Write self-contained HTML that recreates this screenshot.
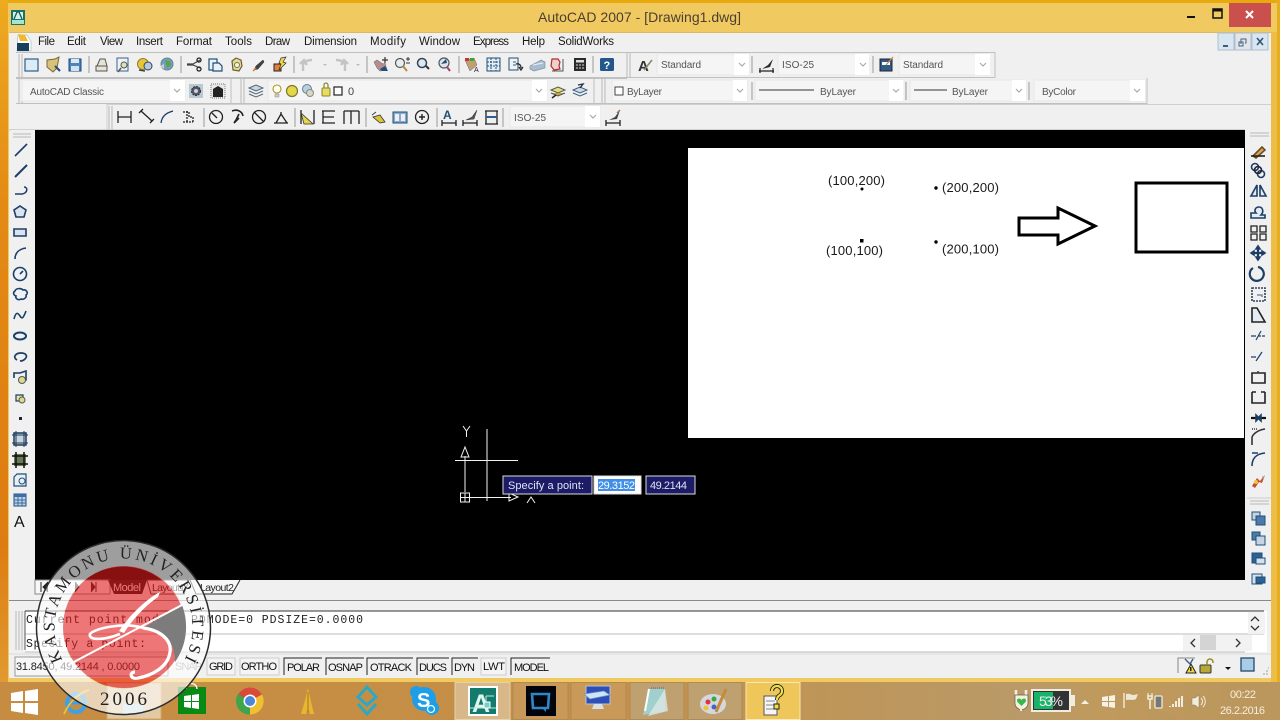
<!DOCTYPE html>
<html><head><meta charset="utf-8"><title>AutoCAD 2007</title>
<style>
html,body{margin:0;padding:0;background:#000;width:1280px;height:720px;overflow:hidden}
svg{display:block}
text{font-family:"Liberation Sans",sans-serif}
.m{font-size:11.5px;fill:#1a1a1a}
.g{font-size:10px;fill:#555}
.s{font-size:11px;fill:#111}
.c{font-family:"Liberation Mono",monospace;font-size:11.5px;fill:#222}
.i{fill:none;stroke:#1c3f66;stroke-width:1.6}
.k{fill:none;stroke:#222;stroke-width:1.3}
.d{fill:none;stroke:#223;stroke-width:1.2}
.sep{stroke:#9a9a9a;stroke-width:1}
.cb{fill:#f5f5f5;stroke:#e8e8e8}
.ar{fill:none;stroke:#aaa;stroke-width:1.2}
.gr{fill:none;stroke:#b8b8b8;stroke-width:1}
</style></head><body>
<svg width="1280" height="720" viewBox="0 0 1280 720" xmlns="http://www.w3.org/2000/svg">
<defs>
<linearGradient id="bar" x1="0" x2="1" y1="0" y2="0"><stop offset="0" stop-color="#c68d42"/><stop offset=".45" stop-color="#c58f47"/><stop offset=".8" stop-color="#b99a68"/><stop offset=".86" stop-color="#c09a5c"/><stop offset="1" stop-color="#b6935f"/></linearGradient>
<linearGradient id="edge" x1="0" x2="0" y1="0" y2="1"><stop offset="0" stop-color="#eeaa20"/><stop offset=".3" stop-color="#e38a14"/><stop offset=".8" stop-color="#dd7c12"/><stop offset="1" stop-color="#e09a30"/></linearGradient>
<path id="ringp" d="M62.6 660 A69 69 0 1 1 190 660" fill="none"/>
</defs>

<!-- window frame -->
<rect width="1280" height="720" fill="#f1c961"/>
<rect x="0" y="0" width="1280" height="3" fill="#e8a90f"/>
<rect x="0" y="0" width="8" height="682" fill="url(#edge)"/>
<rect x="1271" y="32" width="9" height="650" fill="#eebd48"/>
<rect x="1277" y="0" width="3" height="682" fill="#e8ad1c"/>
<rect x="9" y="32" width="1262" height="646" fill="#f0f0f0"/>
<rect x="9" y="32" width="1262" height="1" fill="#d9b968"/>

<!-- title -->
<rect x="11" y="10" width="14" height="15" fill="#14766b"/>
<rect x="13" y="12" width="10" height="7" fill="#d8eee8"/>
<path d="M14 19l3-7h2l3 7" fill="none" stroke="#0f5f56" stroke-width="1.3"/>
<rect x="12" y="20" width="12" height="4" fill="#a9e3d0"/>
<text x="538" y="22" font-size="14" fill="#4a4030" textLength="203">AutoCAD 2007 - [Drawing1.dwg]</text>
<rect x="1187" y="16" width="8" height="2" fill="#111"/>
<rect x="1213" y="9" width="9" height="9" fill="none" stroke="#111" stroke-width="1.5"/><rect x="1213" y="9" width="9" height="2.5" fill="#111"/>
<rect x="1229" y="3" width="42" height="24" fill="#c9504c"/>
<path d="M1246 11l7 7M1253 11l-7 7" stroke="#fff" stroke-width="2"/>

<!-- MDI buttons -->
<rect x="1218" y="33" width="16" height="17" fill="#d8e6f2" stroke="#aebfce"/><rect x="1223" y="45" width="5" height="2" fill="#3b5c7e"/>
<rect x="1235" y="33" width="16" height="17" fill="#e2e6ea" stroke="#aebfce"/><path d="M1241 44v-5h5v4h-1M1239 46v-4h4v4z" fill="none" stroke="#47617c"/>
<rect x="1252" y="33" width="16" height="17" fill="#d8e6f2" stroke="#aebfce"/><path d="M1257 38l6 7M1263 38l-6 7" stroke="#36556f" stroke-width="1.6"/>

<!-- menu -->
<path d="M18 35h9l4 6v10H17z" fill="#fff" stroke="#8aa" stroke-width=".5"/>
<path d="M17 43h12v8H17z" fill="#17405f"/><path d="M18 34l7 1 3 6h-8z" fill="#f0b92c"/>
<g class="m">
<text x="38" y="45" textLength="17">File</text>
<text x="67" y="45" textLength="19">Edit</text>
<text x="100" y="45" textLength="23">View</text>
<text x="136" y="45" textLength="27">Insert</text>
<text x="176" y="45" textLength="36">Format</text>
<text x="225" y="45" textLength="27">Tools</text>
<text x="265" y="45" textLength="25">Draw</text>
<text x="304" y="45" textLength="53">Dimension</text>
<text x="370" y="45" textLength="36">Modify</text>
<text x="419" y="45" textLength="41">Window</text>
<text x="473" y="45" textLength="36">Express</text>
<text x="522" y="45" textLength="23">Help</text>
<text x="558" y="45" textLength="56">SolidWorks</text>
</g>

<!-- toolbar rows -->
<path d="M16 77.500H995V52.500M16 103.500H1147V78M16 52.500H995M16 78.500H627" fill="none" stroke="#c0c0c0"/>
<path d="M107 130V104.500H1271" fill="none" stroke="#d0d0d0"/>
<path d="M9 130H1245" stroke="#b4b4b4"/>
<path d="M19 54v23M22 54v23M19 79v24M22 79v24M109 106v24M112 106v24" class="gr"/>

<!-- row 1 icons -->
<rect x="25" y="59" width="13" height="12" fill="#dcecf6" stroke="#2c5f86" stroke-width="1.2"/>
<path d="M47 60l8-1 4-2-2 11-4 4-6-5z" fill="#d8c279" stroke="#7a6a30"/><path d="M55 66l5 5" stroke="#234c78" stroke-width="2"/>
<rect x="69" y="59" width="12" height="12" fill="#4d86b8" stroke="#1d4b78"/><rect x="71" y="59" width="8" height="4" fill="#dbe7f1"/><rect x="71" y="66" width="8" height="5" fill="#d6e3ee"/>
<path d="M89 56v17" class="sep"/>
<path d="M97 66l3-7h5l2 7zM96 66h11v5H96z" fill="#e7e2d6" stroke="#555"/>
<rect x="117" y="58" width="11" height="13" fill="#eef2f6" stroke="#3a6288"/><circle cx="124" cy="65" r="3" fill="#d8e4b8" stroke="#555"/><path d="M121 68l-3 4" stroke="#555" stroke-width="1.5"/>
<circle cx="143" cy="64" r="5.5" fill="#e3c83a" stroke="#9a7a25"/><circle cx="148" cy="66" r="4" fill="#b6cbe0" stroke="#345"/><path d="M139 70l6 1" stroke="#345" stroke-width="1.5"/>
<circle cx="167" cy="64" r="6" fill="#6fa0bf" stroke="#67858f"/><path d="M165 60l5 1 1 4-4 3z" fill="#5fa04a"/><path d="M160 66l4-2v5z" fill="#ccc"/>
<path d="M181 56v17" class="sep"/>
<path d="M187 64h6l7-4M187 65h6l7 3" fill="none" stroke="#444" stroke-width="1.2"/><circle cx="199" cy="60" r="2" class="k"/><circle cx="199" cy="69" r="2" class="k"/>
<rect x="209" y="59" width="8" height="11" fill="#eef3f7" stroke="#1f4f78" stroke-width="1.2"/><path d="M213 63h6l3 3v5h-9z" fill="#eaf0f5" stroke="#1f4f78" stroke-width="1.2"/>
<path d="M232 61l4-3 5 2 1 6-3 5-6-1z" fill="#e4d8a0" stroke="#6e5c2a" stroke-width="1.2"/><circle cx="237" cy="65" r="2.5" fill="#f2f2e6" stroke="#6e7d3a"/>
<path d="M254 70l2-4 7-6 1 2-6 7z" fill="#444" stroke="#222" stroke-width=".5"/><path d="M253 71l3-3" stroke="#d47a36" stroke-width="1.5"/>
<rect x="274" y="64" width="7" height="7" fill="#e67f3c" stroke="#222"/><path d="M281 58l5-1-3 5 3 1-7 7 2-6-2-1z" fill="#f0d848" stroke="#333" stroke-width=".7"/>
<path d="M294 56v17" class="sep"/>
<path d="M303 71v-5c0-4 4-6 9-6M300 64l4-4 3 5" fill="none" stroke="#c2c4c6" stroke-width="2.4"/>
<path d="M323 64h4l-2 2z" fill="#bbb"/>
<path d="M345 71v-5c0-4-4-6-9-6M348 64l-4-4-3 5" fill="none" stroke="#c2c4c6" stroke-width="2.4"/>
<path d="M356 64h4l-2 2z" fill="#bbb"/>
<path d="M367 56v17" class="sep"/>
<path d="M374 62l3-2 6 4 2-1 2 7-7 1-3-3z" fill="#b98c8c" stroke="#777" stroke-width=".6"/><path d="M380 69l5-3 3 5h-6z" fill="#1f4f78"/><path d="M385 57v6M382 60h6" stroke="#333" stroke-width="1.2"/>
<circle cx="400" cy="63" r="4.5" fill="#e4eef4" stroke="#555" stroke-width="1.2"/><path d="M403 66l4 5" stroke="#c08a30" stroke-width="2"/><path d="M408 57v4M406 59h4M406 63h4" stroke="#333"/>
<circle cx="422" cy="63" r="4.5" fill="#dce8f0" stroke="#345" stroke-width="1.5"/><path d="M426 66l3 3" stroke="#333" stroke-width="2"/>
<circle cx="444" cy="63" r="5" fill="#dde6ee" stroke="#555" stroke-width="1.2"/><path d="M441 64l5-5 1 4z" fill="#1f4f78"/><path d="M447 67l3 4" stroke="#a46" stroke-width="2"/>
<path d="M459 56v17" class="sep"/>
<path d="M465 60l9-2 3 7-7 6z" fill="#c0a070" stroke="#666" stroke-width=".5"/><path d="M465 58h4v3h-4z" fill="#c33"/><path d="M470 58h4v3h-4z" fill="#3a3"/><text x="474" y="72" font-size="7" fill="#223">A</text>
<rect x="487" y="58" width="13" height="13" fill="#e6eef4" stroke="#1f4f78"/><path d="M491 58v13M496 58v13M487 62h13M487 66h13" stroke="#1f4f78" stroke-dasharray="2 1"/>
<rect x="509" y="58" width="9" height="12" fill="#eef3f7" stroke="#1f4f78"/><path d="M513 62h3M513 65h3" stroke="#456"/><path d="M516 64c3-1 5 1 5 4M519 67l2 3 2-3" fill="none" stroke="#222" stroke-width="1.2"/>
<path d="M530 66l11-6 4 2v6l-11 3-4-2z" fill="#a9bccb" stroke="#7b93a6" stroke-width=".7"/><path d="M533 65l10-2" stroke="#eef" />
<path d="M552 59h6l2 3-1 4 1 3-6 1-3-4z" fill="#ecd0d0" stroke="#b32a2a" stroke-width="1.2"/><path d="M563 59v12h-11" stroke="#555" fill="none"/>
<rect x="574" y="58" width="12" height="13" fill="#2a2a2a"/><rect x="576" y="60" width="8" height="2.5" fill="#ddd"/><path d="M576 65h8M576 68h8" stroke="#d8d8d8" stroke-dasharray="2 1"/>
<path d="M593 56v17" class="sep"/>
<rect x="600" y="58" width="14" height="13" rx="1.5" fill="#23568c"/><text x="603.5" y="69" font-size="11" font-weight="bold" fill="#fff">?</text>
<path d="M627 53v24M630 53v24" class="gr"/>
<text x="638" y="71" font-size="15" font-weight="bold" fill="#333">A</text><path d="M644 70l8-10" stroke="#886" stroke-width="1.6"/>
<rect x="657" y="54" width="92" height="21" class="cb"/><text x="661" y="68" class="g" textLength="40">Standard</text><rect x="734" y="54" width="15" height="21" fill="#fff"/><path d="M739 63l3 3 3-3" class="ar"/>
<path d="M752 56v17" class="sep"/>
<path d="M759 71h15M760 68v5M773 68v5" stroke="#222" stroke-width="1.2"/><path d="M762 69l6-4 5-6-3 8z" fill="#2b2b2b"/>
<rect x="778" y="54" width="90" height="21" class="cb"/><text x="782" y="68" class="g" textLength="32">ISO-25</text><rect x="855" y="54" width="14" height="21" fill="#fff"/><path d="M860 63l3 3 3-3" class="ar"/>
<path d="M873 56v17" class="sep"/>
<rect x="880" y="59" width="12" height="12" fill="#2e5d88" stroke="#223"/><rect x="882" y="62" width="8" height="3" fill="#fff"/><path d="M886 65l7-8" stroke="#d08a4a" stroke-width="1.3"/>
<rect x="899" y="54" width="90" height="21" class="cb"/><text x="903" y="68" class="g" textLength="40">Standard</text><rect x="975" y="54" width="15" height="21" fill="#fff"/><path d="M980 63l3 3 3-3" class="ar"/>

<!-- row 2 -->
<rect x="22" y="80" width="163" height="21" class="cb"/><text x="30" y="95" class="g" textLength="74">AutoCAD Classic</text><rect x="170" y="80" width="15" height="21" fill="#fff"/><path d="M174 89l3 3 3-3" class="ar"/>
<rect x="189" y="84" width="14" height="14" fill="#b9c9d4"/><circle cx="196" cy="91" r="4.5" fill="#556" stroke="#233" stroke-dasharray="2 1"/><circle cx="196" cy="91" r="2" fill="#c8d4dc"/>
<rect x="211" y="84" width="14" height="14" fill="#e8e8e8" stroke="#777" stroke-dasharray="1 1"/><path d="M213 89l5-3 5 3v8h-10z" fill="#222"/>
<path d="M231 79v25" stroke="#c0c0c0"/>
<path d="M241 79v24M244 79v24" class="gr"/>
<path d="M249 88l7-3 7 3-7 3z" fill="#c7d6e2" stroke="#567"/><path d="M249 91l7 3 7-3M249 94l7 3 7-3" fill="none" stroke="#567"/>
<rect x="268" y="80" width="279" height="21" class="cb"/>
<circle cx="277" cy="89" r="4" fill="#fffdf0" stroke="#a8962a" stroke-width="1.1"/><path d="M275 94h4v3h-4z" fill="#ccc" stroke="#888" stroke-width=".5"/>
<circle cx="292" cy="91" r="5.5" fill="#e4d64a" stroke="#7d7a26" stroke-width="1.2"/>
<circle cx="307" cy="89" r="4.5" fill="#b8d0dc" stroke="#5d8296"/><circle cx="310" cy="93" r="3.5" fill="#d7d7c4" stroke="#888"/>
<rect x="322" y="88" width="8" height="8" rx="1" fill="#e8dd5e" stroke="#87832e"/><path d="M324 88v-3a2 2 0 0 1 4 0v3" fill="none" stroke="#87832e" stroke-width="1.2"/>
<rect x="334" y="87" width="8" height="8" fill="#fff" stroke="#222" stroke-width="1.2"/>
<text x="348" y="95" font-size="11" fill="#444">0</text>
<rect x="532" y="80" width="15" height="21" fill="#fff"/><path d="M536 89l3 3 3-3" class="ar"/>
<path d="M551 90l7-3 7 3-7 3z" fill="#dfe27a" stroke="#555"/><path d="M551 93l7 3 7-3" fill="#c4a830" stroke="#555"/><path d="M552 98l4-3" stroke="#223" stroke-width="1.5"/>
<path d="M573 90l7-3 7 3-7 3z" fill="#cfdbe6" stroke="#3d5f80"/><path d="M573 93l7 3 7-3" fill="none" stroke="#3d5f80"/><path d="M580 88l3-4-5 1" fill="none" stroke="#234" stroke-width="1.4"/>
<path d="M594 79v25" stroke="#c0c0c0"/>
<path d="M602 79v24M605 79v24" class="gr"/>
<rect x="612" y="80" width="135" height="21" class="cb"/><rect x="615" y="87" width="8" height="8" fill="#fff" stroke="#444"/><text x="627" y="95" class="g" textLength="35">ByLayer</text><rect x="733" y="80" width="14" height="21" fill="#fff"/><path d="M737 89l3 3 3-3" class="ar"/>
<path d="M752 82v18" class="sep"/>
<rect x="755" y="80" width="150" height="21" class="cb"/><path d="M759 90h55" stroke="#333"/><text x="820" y="95" class="g" textLength="36">ByLayer</text><rect x="889" y="80" width="14" height="21" fill="#fff"/><path d="M893 89l3 3 3-3" class="ar"/>
<path d="M906 82v18" class="sep"/>
<rect x="910" y="80" width="116" height="21" class="cb"/><path d="M914 90h33" stroke="#333"/><text x="952" y="95" class="g" textLength="36">ByLayer</text><rect x="1012" y="80" width="14" height="21" fill="#fff"/><path d="M1016 89l3 3 3-3" class="ar"/>
<path d="M1029 82v18" class="sep"/>
<rect x="1034" y="80" width="111" height="21" class="cb"/><text x="1042" y="95" class="g" textLength="34">ByColor</text><rect x="1130" y="80" width="15" height="21" fill="#fff"/><path d="M1134 89l3 3 3-3" class="ar"/>

<!-- row 3 -->
<g class="k">
<path d="M118 117h13M118 111v12M131 111v12"/>
<path d="M141 111l11 10M139 113l4-4M150 123l4-4"/>
<path d="M161 123c1-7 5-10 12-12" stroke="#1c3f66"/>
<path d="M183 112h6v5h4v6M183 122h10M187 111v12" stroke-dasharray="2 1"/>
<circle cx="216" cy="117" r="6.5"/><path d="M212 113l5 5"/>
<path d="M232 111c5-2 10 0 11 5M239 114l-3 6-2 3 5-5" stroke-width="1.6"/>
<circle cx="259" cy="117" r="6.5"/><path d="M254 112l10 10"/>
<path d="M274 123h14M276 123l5-9 6 9"/><path d="M281 112v3"/>
</g>
<path d="M204 108v19M295 108v19M366 108v19M437 108v19M503 108v19" class="sep"/>
<path d="M301 110v14M314 110v14" class="k"/><path d="M301 113l12 11-9 0z" fill="#e4d64a" stroke="#333" stroke-width=".8"/>
<path d="M322 111h13M322 123h13M323 111v12M323 117h11" class="k"/>
<path d="M344 111h15M344 111v13M351 111v13M359 111v13" class="k"/>
<path d="M372 115l4-3M373 117l7-2 5 7-5 1z" fill="#d8c63a" stroke="#333" stroke-width=".8"/>
<rect x="393" y="112" width="14" height="11" fill="#86aac8" stroke="#1d4f78"/><rect x="395" y="114" width="4" height="7" fill="#eef"/><rect x="401" y="114" width="4" height="7" fill="#eef"/>
<circle cx="422" cy="117" r="6.5" class="k"/><path d="M419 117h6M422 114v6" stroke="#222" stroke-width="1.4"/>
<text x="443" y="119" font-size="12" font-weight="bold" fill="#1f4f78">A</text><path d="M442 123h14M442 120v6M456 120v6" class="k"/>
<path d="M463 123h14M463 120v6M477 120v6" class="k"/><path d="M466 120l6-3 5-7-3 9z" fill="#555" stroke="#333" stroke-width=".5"/>
<path d="M485 111h13M485 124h13M486 111v13M497 111v13" class="k"/><path d="M486 117h11" stroke="#2a5f8e" stroke-width="2"/>
<rect x="510" y="106" width="90" height="21" class="cb"/><text x="514" y="121" class="g" textLength="32">ISO-25</text><rect x="585" y="106" width="15" height="21" fill="#fff"/><path d="M590 115l3 3 3-3" class="ar"/>
<path d="M606 123h14M606 120v6M620 120v6" class="k"/><path d="M609 120l6-3 5-7-3 9z" fill="#444"/><path d="M620 110l-3 3" stroke="#a75" stroke-width="1.5"/>

<!-- left toolbar -->
<rect x="10" y="130" width="25" height="470" fill="#f0f0f0"/>
<path d="M13 134h18M13 137h18" class="gr"/>
<g class="i">
<path d="M15 156l12-12"/>
<path d="M15 177l12-12" stroke-width="2"/>
<path d="M15 194h7c6-1 6-7 2-7" stroke-width="1.5"/>
<path d="M20 206l6 4-2 7h-8l-2-7z" fill="#dae4ee"/>
<path d="M14 229h12v7H14z" fill="#dae4ee"/>
<path d="M15 259c0-6 4-10 11-11"/>
<circle cx="20" cy="274" r="6.5" fill="#eef2f6"/><path d="M20 274l3-3"/>
<path d="M15 291c1-3 6-3 8-1 3-1 6 3 3 5 1 3-3 5-5 4-3 2-6-1-5-3-3-1-3-4-1-5z" fill="#eef2f6"/>
<path d="M14 319c2-8 4-6 6-3s3 3 6-5"/>
<ellipse cx="20" cy="336" rx="6" ry="3.5" fill="#eef2f6" stroke-width="2"/>
<path d="M17 360c-5-3-1-7 4-7s7 3 4 6c-1 1-3 2-5 2" stroke-width="1.7"/>
<path d="M14 378v-5h6l6-2v9l-5 2"/>
<path d="M16 395h7v6h-7z" fill="#e4e6a8" stroke-width="1.2"/>
</g>
<circle cx="22" cy="380" r="3.5" fill="#dcdc80" stroke="#556"/>
<circle cx="22" cy="400" r="3" fill="#dcdc80" stroke="#556"/>
<rect x="19" y="417" width="3" height="3" fill="#223"/>
<rect x="14" y="433" width="12" height="12" fill="#c7d4de" stroke="#1d3c5c" stroke-width="1.5"/><path d="M12 435h16M12 443h16M16 431v16M24 431v16" stroke="#1d3c5c"/>
<rect x="14" y="454" width="12" height="12" fill="#6a7a52"/><path d="M12 456h16M12 464h16M16 452v16M24 452v16" stroke="#111" stroke-width="1.5"/>
<path d="M14 486v-9l3-3h9v12z" fill="#e8eff5" stroke="#1d4f78" stroke-width="1.2"/><circle cx="22" cy="481" r="3" fill="none" stroke="#1d4f78"/>
<rect x="14" y="494" width="12" height="12" fill="#b8d0ec" stroke="#244f80"/><rect x="14" y="494" width="12" height="3" fill="#3a6ea8"/><path d="M18 497v9M22 497v9M14 500h12M14 503h12" stroke="#244f80" stroke-width=".7"/>
<text x="14" y="527" font-size="16" fill="#111">A</text>

<!-- canvas -->
<rect x="35" y="130" width="1210" height="450" fill="#000"/>
<rect x="688" y="148" width="556" height="290" fill="#fff"/>
<g font-size="13" fill="#1a1a1a">
<text x="828" y="185" textLength="57">(100,200)</text>
<text x="942" y="192" textLength="57">(200,200)</text>
<text x="826" y="255" textLength="57">(100,100)</text>
<text x="942" y="253.500" textLength="57">(200,100)</text>
</g>
<circle cx="862" cy="189" r="1.5" fill="#000"/><circle cx="936" cy="188" r="1.7" fill="#000"/>
<rect x="860" y="239" width="3.500" height="3.500" fill="#000"/><circle cx="936" cy="242" r="1.7" fill="#000"/>
<path d="M1019 218H1058V208L1095 226 1058 244V235H1019z" fill="#fff" stroke="#000" stroke-width="3"/>
<rect x="1136" y="183" width="91" height="69" fill="#fff" stroke="#000" stroke-width="3"/>

<!-- crosshair & UCS -->
<g stroke="#f2f2f2" fill="none" stroke-width="1">
<path d="M487 429v72M455 460.500h63"/>
<path d="M465 492V456M470 497.500h41"/>
<path d="M461 457l4-10 4 10zM509 493l9 4-9 4z"/>
<rect x="460.500" y="493" width="9" height="9"/><path d="M465 493v9M460 497.500h10"/>
<path d="M463 426l3.500 5 3.500-5M466.500 431v6M527 503l4-6 4 6"/>
</g>
<rect x="503" y="476" width="89" height="18" fill="#1c1c66" stroke="#ddd"/>
<text x="508" y="489" font-size="11" fill="#dfe3f4" textLength="76">Specify a point:</text>
<rect x="594" y="476" width="47" height="18" fill="#fff" stroke="#ddd"/>
<rect x="598" y="479" width="37" height="12" fill="#3f8fe8"/>
<text x="598" y="489" font-size="11" fill="#fff" textLength="37">29.3152</text>
<rect x="646" y="476" width="49" height="18" fill="#1c1c66" stroke="#ddd"/>
<text x="650" y="489" font-size="11" fill="#dfe3f4" textLength="37">49.2144</text>

<!-- right toolbar -->
<rect x="1245" y="130" width="26" height="470" fill="#f0f0f0"/>
<path d="M1250 133h19M1250 136h19" class="gr"/>
<g class="i">
<path d="M1253 156l9-9 3 3-9 8z" fill="#d9a35a" stroke="#6a5020"/><path d="M1251 156h14" stroke="#222"/>
<circle cx="1255" cy="167" r="3.5"/><circle cx="1261" cy="174" r="3.500"/><circle cx="1258" cy="170" r="3.5" stroke="#223"/>
<path d="M1257 185l-6 11h6zM1260 185l6 11h-6z" fill="#e4ebf2"/>
<path d="M1251 218h14v-3h-4c3-3 2-8-2-8s-5 4-3 6h-5z" fill="#e4ebf2"/>
<path d="M1251 226h6v6h-6zM1260 226h6v6h-6zM1251 234h6v6h-6zM1260 234h6v6h-6z" stroke="#222" stroke-width="1.3"/>
<path d="M1258 246v14M1251 253h14" stroke-width="2.2"/>
<path d="M1251 253l3-2v4zM1265 253l-3-2v4zM1258 246l-2 3h4zM1258 260l-2-3h4z" fill="#1c3f66"/>
<path d="M1253 268a7 7 0 1 0 5-1" stroke-width="2.2"/>
<rect x="1252" y="288" width="13" height="13" stroke-dasharray="2 1" stroke="#345" fill="#eef2f6"/><path d="M1257 295h5v2" stroke="#888"/>
<path d="M1252 308v14h13l-8-14z" fill="#e4ebf2" stroke="#222"/>
<path d="M1251 336h5M1258 336h3M1262 336h3M1256 340l5-9" stroke-width="1.2"/>
<path d="M1251 357h5M1258 357h1M1256 361l6-9" stroke-width="1.2"/>
<path d="M1252 373h13v10h-13z" stroke="#222"/><path d="M1258 373v-2" stroke-width="1.500"/>
<path d="M1252 397v-5M1252 392h4M1265 397v-5M1261 392h4M1252 397v6h13v-6" stroke="#222"/>
<path d="M1251 418h5M1261 418h5" stroke="#111" stroke-width="2.2"/><path d="M1256 415l3 3-3 3zM1261 415l-3 3 3 3z" fill="#111"/>
<path d="M1252 445v-7c0-3 5-8 13-9" stroke="#333"/><path d="M1252 429h6" stroke="#333" stroke-dasharray="1 1"/>
<path d="M1252 466c0-8 4-12 13-13M1252 453h6" stroke="#1c3f66" stroke-width="1.6"/>
</g>
<path d="M1252 486l5-8 3 3 5-6-3 8-3-1-4 6z" fill="#c94f2c"/><circle cx="1256" cy="482" r="2" fill="#e6c740"/><circle cx="1263" cy="477" r="1" fill="#aaa"/>
<path d="M1247 498H1271" stroke="#ccc"/><path d="M1250 501h19M1250 504h19" class="gr"/>
<g stroke="#1f4f78" stroke-width="1">
<rect x="1252" y="512" width="8" height="8" fill="#c4d4e4"/><rect x="1256" y="516" width="9" height="9" fill="#4d7aa8"/>
<rect x="1252" y="532" width="8" height="8" fill="#4d7aa8"/><rect x="1256" y="536" width="9" height="9" fill="#c4d4e4"/>
<rect x="1252" y="553" width="10" height="10" fill="#2e6296"/><rect x="1256" y="558" width="9" height="6" fill="#d5e1ec"/>
<rect x="1252" y="574" width="10" height="10" fill="#d5e1ec"/><rect x="1256" y="577" width="9" height="6" fill="#2e6296"/>
</g>

<!-- tabs -->
<rect x="35" y="580" width="1210" height="20" fill="#f0f0f0"/>
<rect x="35" y="580" width="75" height="14" fill="#f7f7f7" stroke="#888"/>
<path d="M41 582v10M48 582l-5 5 5 5M96 582v10M91 582l4 5-4 5M75 582l4 5-4 5" stroke="#222" fill="#222" stroke-width="1"/>
<path d="M108 580l6 14h28l5-14z" fill="#111"/>
<text x="113" y="591" font-size="11" fill="#fff" textLength="28">Model</text>
<path d="M147 580l4 14h33l5-14z" fill="#f7f7f7" stroke="#333"/>
<text x="152" y="591" font-size="10.500" fill="#222" textLength="33">Layout1</text>
<path d="M190 580l6 14h36l8-14" fill="#f7f7f7" stroke="#222"/>
<text x="200" y="591" font-size="10.500" fill="#222" textLength="34">Layout2</text>

<!-- lower panels -->
<rect x="9" y="600" width="1262" height="78" fill="#f0f0f0"/>
<rect x="9" y="600" width="1262" height="1" fill="#8a8a8a"/>
<rect x="25" y="611" width="1242" height="41" fill="#fff"/>
<path d="M25 611H1264" stroke="#333"/>
<path d="M25 634H1264M25 652H1245" stroke="#bbb"/>
<path d="M25 611v39" stroke="#555"/>
<path d="M16 611v39M19 611v39M22 611v39" class="gr"/>
<rect x="1248" y="612" width="17" height="22" fill="#f2f2f2"/>
<path d="M1251 621l4-4 4 4M1251 626l4 4 4-4" fill="none" stroke="#333" stroke-width="1.3"/>
<rect x="1183" y="635" width="69" height="16" fill="#f2f2f2"/>
<rect x="1200" y="635" width="16" height="15" fill="#d4d4d4"/>
<path d="M1195 639l-4 4 4 4M1236 639l4 4-4 4" fill="none" stroke="#333" stroke-width="1.3"/>
<text x="26" y="623" class="c" textLength="337">Current point modes:  PDMODE=0  PDSIZE=0.0000</text>
<text x="26" y="647" class="c" textLength="120">Specify a point:</text>

<!-- status bar -->
<path d="M9 654H1271" stroke="#dcdcdc"/>
<rect x="15" y="657" width="153" height="19" fill="#f7f7f7" stroke="#999"/>
<text x="16" y="670" font-size="11" fill="#222" textLength="124">31.8450, 49.2144 , 0.0000</text>
<g>
<text x="175" y="670" font-size="11" fill="#999" textLength="27">SNAP</text>
<rect x="207" y="658" width="28" height="17" fill="#f4f4f4" stroke="#ccc"/><text x="209" y="670" class="s" textLength="24">GRID</text>
<rect x="240" y="658" width="39" height="17" fill="#f4f4f4" stroke="#ccc"/><text x="241" y="670" class="s" textLength="36">ORTHO</text>
<path d="M284 675v-17h38M326 675v-17h38M367 675v-17h46M417 675v-17h32M452 675v-17h26M511 675v-17h39" fill="none" stroke="#222"/>
<text x="287" y="671" class="s" textLength="33">POLAR</text>
<text x="328" y="671" class="s" textLength="35">OSNAP</text>
<text x="370" y="671" class="s" textLength="42">OTRACK</text>
<text x="419" y="671" class="s" textLength="28">DUCS</text>
<text x="454" y="671" class="s" textLength="21">DYN</text>
<rect x="481" y="658" width="25" height="17" fill="#f4f4f4" stroke="#ccc"/><text x="483" y="670" class="s" textLength="22">LWT</text>
<text x="514" y="671" class="s" textLength="35">MODEL</text>
</g>
<path d="M1178 673v-15h17" fill="none" stroke="#888"/>
<path d="M1186 673l5-9 5 9z" fill="#ecd83a" stroke="#222"/><rect x="1190" y="667" width="1.500" height="4" fill="#222"/><path d="M1185 659l5 5 3-5" fill="none" stroke="#3a5c80" stroke-width="1.4"/>
<rect x="1200" y="665" width="11" height="8" rx="1" fill="#b5a836" stroke="#333"/><path d="M1207 665v-3a3 3 0 0 1 6 0v1" fill="none" stroke="#a08a20" stroke-width="1.5"/>
<path d="M1225 667h6l-3 3z" fill="#111"/>
<rect x="1241" y="658" width="13" height="13" fill="#a8cbe6" stroke="#23486c" stroke-width="1.300"/>
<path d="M1266 671h2M1263 674h2M1266 674h2M1268 668h1" stroke="#bbb" stroke-width="1.500"/>

<!-- taskbar -->
<rect x="0" y="682" width="1280" height="38" fill="url(#bar)"/>
<path d="M1100 682h180v38h-100z" fill="#c09a5c" opacity=".5"/>
<path d="M11 693l12-2v10H11zM25 691l13-2v12H25zM11 703h12v10l-12-2zM25 703h13v12l-13-2z" fill="#fff"/>

<!-- taskbar buttons -->
<rect x="107" y="683" width="54" height="36" fill="#e0c9a3" stroke="#d4a868"/>
<path d="M123 704h20v10h-20z" fill="#c8dce6"/>
<g stroke="#b08a50">
<rect x="455" y="682.500" width="55" height="37" fill="#d8b888" stroke="#e4d2b0"/>
<rect x="513" y="682.500" width="55" height="37" fill="#c9995a"/>
<rect x="571" y="682.500" width="55" height="37" fill="#c9995a"/>
<rect x="630" y="682.500" width="54" height="37" fill="#bfa070"/>
<rect x="688" y="682.500" width="54" height="37" fill="#bfa070"/>
</g>
<rect x="746" y="682.500" width="54" height="37" fill="#eec65a" stroke="#fbe8b0"/>

<!-- IE -->
<circle cx="76" cy="703" r="9" fill="none" stroke="#3ba2e8" stroke-width="4"/><path d="M68 703h17" stroke="#3ba2e8" stroke-width="3"/><path d="M64 714c6-14 17-22 25-24" fill="none" stroke="#e8c23a" stroke-width="1.800"/>
<!-- Store -->
<rect x="178" y="687" width="28" height="27" fill="#098a14"/><path d="M186 689a5 5 0 0 1 11 0" fill="none" stroke="#fff" stroke-width="1.300"/><path d="M184 696l7-1v6h-7zM192 695l7-1v7h-7zM184 702h7v6l-7-1zM192 702h7v7l-7-1z" fill="#fff"/>
<!-- Chrome -->
<circle cx="250" cy="701" r="13.500" fill="#d94a3a"/><path d="M250 701L262 694.500A13.500 13.500 0 0 1 250 714.500z" fill="#f0c030"/><path d="M250 701L250 714.500A13.500 13.500 0 0 1 238 694z" fill="#3ea54a"/><circle cx="250" cy="701" r="6.500" fill="#fff"/><circle cx="250" cy="701" r="5" fill="#4a88d8"/>
<!-- flame -->
<path d="M308 688l4 18 2 8h-4l-2-6-2 6h-5l3-10z" fill="#e8b630"/><path d="M308 692v20" stroke="#a07a20"/>
<!-- diamond -->
<path d="M367 687l9 10-9 8-9-8z" fill="none" stroke="#2aa8c4" stroke-width="3"/><path d="M358 704l9 10 9-10" fill="none" stroke="#2aa8c4" stroke-width="3"/>
<!-- skype -->
<circle cx="424" cy="699" r="12" fill="#1e9ee8"/><circle cx="432" cy="708" r="7" fill="#1e9ee8"/><circle cx="416" cy="692" r="6" fill="#1e9ee8"/>
<text x="417" y="707" font-size="20" font-weight="bold" fill="#fff">S</text>
<circle cx="431" cy="709" r="3.500" fill="none" stroke="#dff" stroke-width="1.300"/>
<!-- AutoCAD -->
<rect x="468" y="686" width="30" height="30" fill="#fff"/><rect x="470" y="688" width="26" height="26" fill="#137a6e"/><text x="472" y="712" font-size="25" font-weight="bold" fill="#dff5ee">A</text><path d="M486 696h8M486 696v14M470 708h26" stroke="#bfe9db"/><rect x="484" y="702" width="6" height="6" fill="#7cc" stroke="#fff"/>
<!-- monitor app -->
<rect x="526" y="686" width="30" height="30" fill="#02060c"/><path d="M532 694h17l-1 14h-9l-6 0z" fill="none" stroke="#2e88c8" stroke-width="2.600"/><path d="M546 708v4l-4-4" fill="#2e88c8"/>
<!-- keyboard -->
<rect x="586" y="686" width="24" height="18" fill="#2f4fb8" stroke="#b8c4d4"/><path d="M584 694l20-3 6 4-20 4z" fill="#cfe4f8" stroke="#6a90c0" stroke-width=".8"/><path d="M594 704h8l2 5h-12z" fill="#dbe0e4"/>
<!-- notepad -->
<path d="M649 689h16v22l-22 4z" fill="#9fd0cc"/><path d="M645 711l4-22" stroke="#fff" stroke-width="2"/><path d="M665 689l3 22-20 5" fill="#dde7e6" opacity=".8"/><path d="M651 688h13" stroke="#789" stroke-dasharray="1 1" stroke-width="2"/>
<!-- paint -->
<ellipse cx="713" cy="704" rx="13" ry="10" fill="#d4d8dc"/><circle cx="708" cy="702" r="2.500" fill="#d34"/><circle cx="714" cy="699" r="2.500" fill="#3a4"/><circle cx="706" cy="708" r="2.500" fill="#f0c040"/><circle cx="714" cy="707" r="2.500" fill="#46c"/><path d="M716 712l10-23" stroke="#c78a3a" stroke-width="3"/>
<!-- help -->
<path d="M764 696h13v19h-13z" fill="#f5f5f5" stroke="#555"/><path d="M766 701h9M766 705h9M766 709h9" stroke="#888"/><path d="M772 691a5 5 0 1 1 8 4c-2 1-3 3-3 5" fill="none" stroke="#222" stroke-width="4"/><path d="M772 691a5 5 0 1 1 8 4c-2 1-3 3-3 5" fill="none" stroke="#f0e040" stroke-width="2.200"/><rect x="774" y="704" width="5" height="5" fill="#f0e040" stroke="#222"/>

<!-- tray -->
<path d="M1016 690v5M1026 690v5" stroke="#f6efe0" stroke-width="2.600"/><path d="M1015 695h13v8a6.500 6.500 0 0 1-13 0z" fill="#f4f0e4" stroke="#6a5a3e" stroke-width=".7"/><path d="M1021.500 706l-4-4c-2-3 2-5 4-2 2-3 6-1 4 2z" fill="#38b84a"/><path d="M1021 708v3" stroke="#f6efe0" stroke-width="2"/>
<rect x="1032" y="690" width="38" height="21" fill="#333" stroke="#f0ece0" stroke-width="2"/><rect x="1034" y="692" width="19" height="17" fill="#17b368"/><rect x="1071" y="695" width="4" height="11" fill="#f0ece0"/>
<text x="1039" y="706" font-size="14" fill="#eee" textLength="24">53%</text>
<path d="M1081 704l4-4 4 4z" fill="#f4efe2"/>
<path d="M1102 697l6-1v5h-6zM1109 696l6-1v6h-6zM1102 702h6v5l-6-1zM1109 702h6v6l-6-1z" fill="#f6f2e6"/>
<path d="M1124 693v15" stroke="#eee7d4" stroke-width="1.500"/><path d="M1126 694c4-1 5 1 8 1l4-1-2 5c-3 2-6 0-10 1z" fill="#eee7d4"/>
<path d="M1148 696h4v3h-4zM1150 699v10" stroke="#f0ead8" fill="none" stroke-width="1.600"/><path d="M1148 693v3M1152 693v3" stroke="#f0ead8" stroke-width="1.200"/><rect x="1155" y="696" width="7" height="12" rx="1" fill="#777" stroke="#f0ead8" stroke-width="1.300"/>
<path d="M1169 707h2v-1h-2zM1172 707h2v-3h-2zM1175 707h2v-6h-2zM1178 707h2v-9h-2zM1181 707h2v-11h-2z" fill="#f2ecdc"/>
<path d="M1192 698h3l4-3v13l-4-3h-3z" fill="#f2ecdc" stroke="#8a7a5a" stroke-width=".5"/><path d="M1201 698c2 2 2 5 0 7M1203 696c3 3 3 8 0 11" fill="none" stroke="#f2ecdc"/>
<text x="1230" y="698" font-size="11" fill="#f5eedd" textLength="26">00:22</text>
<text x="1220" y="714" font-size="11" fill="#f5eedd" textLength="45">26.2.2016</text>

<!-- watermark -->
<g>
<circle cx="123.500" cy="627.500" r="74" fill="none" stroke="#fff" stroke-opacity=".62" stroke-width="26"/>
<circle cx="123.500" cy="627.500" r="87" fill="none" stroke="#2c2c2c" stroke-width="1.500"/>
<circle cx="124" cy="627" r="61" fill="#e41a1a" fill-opacity=".6"/>
<path d="M182 605A61 61 0 0 1 175 662C175 642 165 632 143 628z" fill="#7c7c7c"/>
<path d="M70 664L182 605" stroke="#fff" stroke-width="2" fill="none"/>
<path d="M119 631C130 615 145 600 160 592L158 597C145 606 132 620 124 633z" fill="#fff"/>
<path d="M143 628C125 622 95 628 90 634C88 641 105 640 120 634" fill="none" stroke="#fff" stroke-width="2.600"/>
<path d="M143 628C160 630 172 640 170 652C168 668 150 676 138 678C130 680 129 672 135 672" fill="none" stroke="#fff" stroke-width="3.200"/>
<path d="M62.600 660A69 69 0 1 1 184.400 660" id="ringq" fill="none"/>
<text font-size="16.500" fill="#222" style="font-family:'Liberation Serif',serif" letter-spacing="3">
<textPath href="#ringq">KASTAMONU ÜNİVERSİTESİ</textPath>
</text>
<text x="100" y="705" font-size="19" fill="#222" style="font-family:'Liberation Serif',serif" letter-spacing="3">2006</text>
</g>
</svg>
</body></html>
